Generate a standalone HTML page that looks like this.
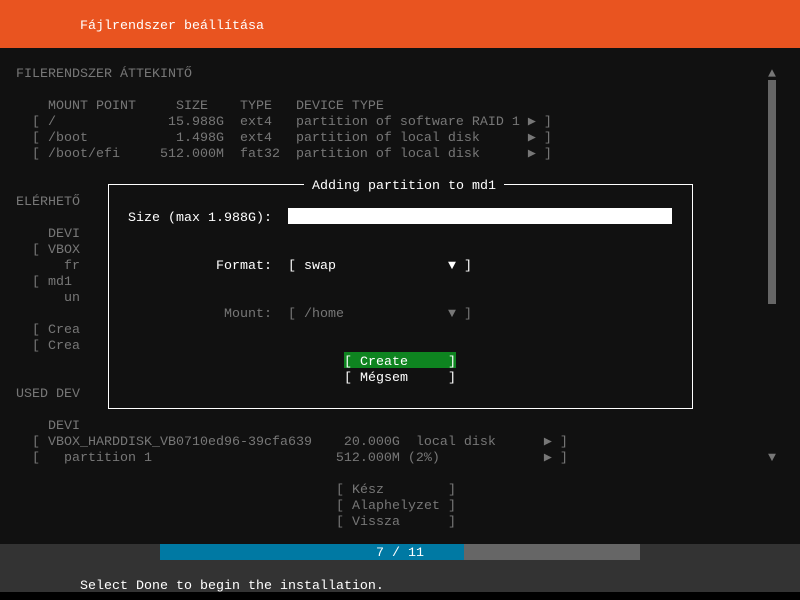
<!DOCTYPE html>
<html><head><meta charset="utf-8"><style>
body{margin:0;width:800px;height:600px;background:#111;position:relative;overflow:hidden;font-family:"Liberation Mono","DejaVu Sans Mono",monospace;font-size:13.33px;}
.t{position:absolute;white-space:pre;line-height:16px;height:16px;}
.t span.s{position:relative;top:3px}
.d{color:#777}.w{color:#fff}
</style></head><body>
<div style="position:absolute;left:0;top:0;width:800px;height:48px;background:#e95420"></div>
<div class="t w" style="left:80px;top:19px">Fájlrendszer beállítása</div>

<div class="t d" style="left:16px;top:67px">FILERENDSZER ÁTTEKINTŐ</div>
<div class="t d" style="left:48px;top:99px">MOUNT POINT     SIZE    TYPE   DEVICE TYPE</div>
<div class="t d" style="left:32px;top:115px">[ /              15.988G  ext4   partition of software RAID 1 ▶ ]</div>
<div class="t d" style="left:32px;top:131px">[ /boot           1.498G  ext4   partition of local disk      ▶ ]</div>
<div class="t d" style="left:32px;top:147px">[ /boot/efi     512.000M  fat32  partition of local disk      ▶ ]</div>
<div class="t d" style="left:16px;top:195px">ELÉRHETŐ</div>
<div class="t d" style="left:48px;top:227px">DEVI</div>
<div class="t d" style="left:32px;top:243px">[ VBOX</div>
<div class="t d" style="left:64px;top:259px">fr</div>
<div class="t d" style="left:32px;top:275px">[ md1</div>
<div class="t d" style="left:64px;top:291px">un</div>
<div class="t d" style="left:32px;top:323px">[ Crea</div>
<div class="t d" style="left:32px;top:339px">[ Crea</div>
<div class="t d" style="left:16px;top:387px">USED DEV</div>
<div class="t d" style="left:48px;top:419px">DEVI</div>
<div class="t d" style="left:32px;top:435px">[ VBOX_HARDDISK_VB0710ed96-39cfa639    20.000G  local disk      ▶ ]</div>
<div class="t d" style="left:32px;top:451px">[   partition 1                       512.000M (2%)             ▶ ]</div>
<div class="t d" style="left:336px;top:483px">[ Kész        ]</div>
<div class="t d" style="left:336px;top:499px">[ Alaphelyzet ]</div>
<div class="t d" style="left:336px;top:515px">[ Vissza      ]</div>

<div class="t d" style="left:768px;top:67px">▲</div>
<div style="position:absolute;left:768px;top:80px;width:8px;height:224px;background:#666"></div>
<div class="t d" style="left:768px;top:451px">▼</div>

<div style="position:absolute;left:108px;top:184px;width:583px;height:223px;border:1px solid #fff;background:#111"></div>
<div class="t w" style="left:304px;top:179px;background:#111"> Adding partition to md1 </div>
<div class="t w" style="left:128px;top:211px">Size (max 1.988G):</div>
<div style="position:absolute;left:288px;top:208px;width:384px;height:16px;background:#fff"></div>
<div class="t w" style="left:216px;top:259px">Format:  [ swap              ▼ ]</div>
<div class="t d" style="left:224px;top:307px">Mount:  [ /home             ▼ ]</div>
<div style="position:absolute;left:344px;top:352px;width:112px;height:16px;background:#0e8420"></div>
<div class="t w" style="left:344px;top:355px">[ Create     ]</div>
<div class="t w" style="left:344px;top:371px">[ Mégsem     ]</div>

<div style="position:absolute;left:0;top:544px;width:800px;height:48px;background:#333"></div>
<div style="position:absolute;left:160px;top:544px;width:304px;height:16px;background:#0079a3"></div>
<div style="position:absolute;left:464px;top:544px;width:176px;height:16px;background:#666"></div>
<div class="t w" style="left:376px;top:546px">7 / 11</div>
<div class="t w" style="left:80px;top:579px">Select Done to begin the installation.</div>
<div style="position:absolute;left:0;top:592px;width:800px;height:8px;background:#000"></div>
</body></html>
